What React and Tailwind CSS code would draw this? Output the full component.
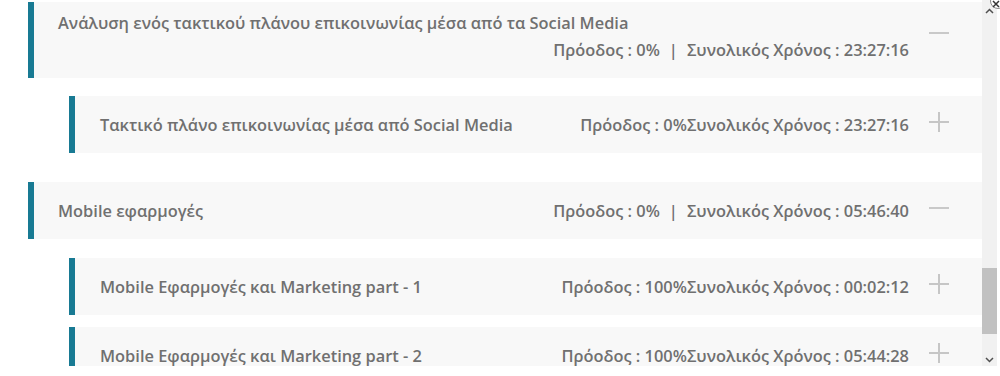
const rows = [
  {
    level: 0,
    title: 'Ανάλυση ενός τακτικού πλάνου επικοινωνίας μέσα από τα Social Media',
    progress: '0%',
    time: '23:27:16',
    open: true,
  },
  {
    level: 1,
    title: 'Τακτικό πλάνο επικοινωνίας μέσα από Social Media',
    progress: '0%',
    time: '23:27:16',
  },
  { level: 0, title: 'Mobile εφαρμογές', progress: '0%', time: '05:46:40', open: true },
  { level: 1, title: 'Mobile Εφαρμογές και Marketing part - 1', progress: '100%', time: '00:02:12' },
  { level: 1, title: 'Mobile Εφαρμογές και Marketing part - 2', progress: '100%', time: '05:44:28' },
]

const gaps = ['mt-[2px]', 'mt-[18px]', 'mt-[29px]', 'mt-[19px]', 'mt-[12px]']

function Toggle({ open }) {
  return (
    <svg width="20" height="20" viewBox="0 0 20 20">
      <path d="M0 10 H20" stroke={open ? '#c9c9c9' : '#c6c6c6'} strokeWidth="2" />
      {!open && <path d="M10 0 V20" stroke="#c6c6c6" strokeWidth="2" />}
    </svg>
  )
}

function Row({ row, index }) {
  const top = row.level === 0
  const wrapped = index === 0
  return (
    <div
      className={`${gaps[index]} ${top ? 'ml-[28px]' : 'ml-[69px]'} flex shrink-0 border-l-[6px] border-[#187a93] bg-[#f8f8f8] ${
        wrapped ? 'h-[76px]' : 'h-[57px]'
      }`}
    >
      <div
        className={`flex flex-1 flex-wrap items-center gap-y-[5px] ${top ? 'pl-[24px]' : 'pl-[25px]'} ${
          wrapped ? 'content-start pt-[10px]' : ''
        }`}
      >
        <span>{row.title}</span>
        <span className="ml-auto">
          {top ? (
            <>
              Πρόοδος : {row.progress}
              <span className="mx-[9px]">|</span>
              Συνολικός Χρόνος : {row.time}
            </>
          ) : (
            <>
              Πρόοδος : {row.progress}Συνολικός Χρόνος : {row.time}
            </>
          )}
        </span>
      </div>
      <div
        className={`flex w-[73px] shrink-0 justify-center pr-[13px] ${
          wrapped ? 'items-start pt-[21px]' : 'items-center pb-[5px]'
        }`}
      >
        <Toggle open={row.open} />
      </div>
    </div>
  )
}

export default function App() {
  return (
    <div className="relative h-[376px] w-[1000px] overflow-hidden bg-white font-['Open_Sans',sans-serif] text-[16.4px] font-semibold leading-[22px] text-[#707070]">
      <div className="flex h-[366px] w-[997px]">
        <div className="flex flex-1 flex-col overflow-hidden">
          {rows.map((row, i) => (
            <Row key={i} row={row} index={i} />
          ))}
        </div>
        <div className="flex w-[15px] shrink-0 flex-col items-center bg-[#f1f1f1]">
          <svg width="9" height="6" viewBox="0 0 9 6" className="mt-[8px]">
            <path d="M1 5 L4.5 1.5 L8 5" fill="none" stroke="#505050" strokeWidth="1.5" />
          </svg>
          <div className="mt-[254px] h-[66px] w-full bg-[#c1c1c1]" />
          <svg width="9" height="6" viewBox="0 0 9 6" className="mt-[23px]">
            <path d="M1 1 L4.5 4.5 L8 1" fill="none" stroke="#505050" strokeWidth="1.5" />
          </svg>
        </div>
      </div>
      <div className="absolute right-[-6px] top-[-7px] flex size-[16px] items-center justify-center rounded-full border border-[#8a8a8a] bg-white">
        <svg width="8" height="8" viewBox="0 0 8 8" className="mt-[5px] mr-[4px]">
          <path d="M1 1 L7 7 M7 1 L1 7" stroke="#333" strokeWidth="1.5" />
        </svg>
      </div>
    </div>
  )
}
